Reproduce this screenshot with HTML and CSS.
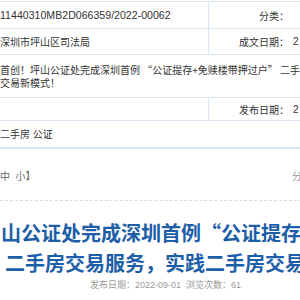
FILE: index.html
```html
<!DOCTYPE html>
<html>
<head>
<meta charset="utf-8">
<link rel="stylesheet" href="styles.css">
</head>
<body>
<div class="page">
  <div class="info">
    <div class="row r1">
      <div class="val num">11440310MB2D066359/2022-00062</div>
      <div class="lab">分类：</div>
      <div class="v2"></div>
    </div>
    <div class="row r2">
      <div class="val">深圳市坪山区司法局</div>
      <div class="lab">成文日期：</div>
      <div class="v2">2</div>
    </div>
    <div class="row r3">
      <div class="wide cjk">首创！坪山公证处完成深圳首例 “公证提存+免赎楼带押过户” 二手房交易新模式！</div>
    </div>
    <div class="row r4">
      <div class="val"></div>
      <div class="lab">发布日期：</div>
      <div class="v2">2</div>
    </div>
    <div class="row r5">
      <div class="wide">二手房 公证</div>
    </div>
  </div>
  <div class="tools">
    <span class="size">中&nbsp;&nbsp;小】</span>
    <span class="share">分</span>
  </div>
  <h1 class="title">
    <span class="l1">山公证处完成深圳首例“公证提存</span>
    <span class="l2">二手房交易服务，实践二手房交易</span>
  </h1>
  <div class="meta">发布日期：2022-09-01&nbsp;&nbsp;浏览次数：61</div>
</div>
</body>
</html>
```
FILE: styles.css
```css
html, body {
  margin: 0;
  padding: 0;
  background: #fff;
  overflow: hidden;
}
body {
  width: 300px;
  height: 300px;
  font-family: "Liberation Sans", "Noto Sans CJK SC", sans-serif;
  color: #333;
}
.page {
  width: 300px;
  padding-top: 1px;
}
.info {
  border-bottom: 2px solid #d8e4f2;
}
.row {
  display: grid;
  grid-template-columns: 208px 85px 60px;
  border-top: 1px solid #d8e4f2;
  font-size: 10px;
  width: 353px;
}
.r1 { height: 26px; }
.r2 { height: 25px; }
.r3 { height: 42px; }
.r4 { height: 22px; }
.r5 { height: 26px; }
.val, .lab, .v2, .wide {
  display: flex;
  align-items: center;
  white-space: nowrap;
}
.num { font-size: 10.6px; }
.lab {
  border-left: 1px solid #d8e4f2;
  justify-content: flex-end;
  padding-right: 4px;
}
.v2 { padding-left: 0; }
.wide {
  grid-column: 1 / 4;
  white-space: normal;
  width: 314px;
  line-height: 13px;
}
.cjk {
  font-family: "Noto Sans CJK SC", sans-serif;
}
.tools {
  display: flex;
  justify-content: space-between;
  align-items: center;
  height: 50px;
  border-bottom: 1px dashed #ddd;
  font-size: 10px;
  padding-top: 1px;
  width: 302px;
}
.size { color: #666; }
.share { color: #999; }
.title {
  margin: 0;
  padding-top: 17px;
  font-size: 20px;
  line-height: 30px;
  font-weight: bold;
  color: #1d5ea8;
  font-family: "Noto Sans CJK SC", sans-serif;
  white-space: nowrap;
}
.title span { display: block; }
.l1 { padding-left: 1px; }
.l2 { padding-left: 5px; }
.meta {
  padding-left: 90px;
  font-size: 9px;
  color: #999;
  line-height: 12px;
  margin-top: 1px;
}
```
